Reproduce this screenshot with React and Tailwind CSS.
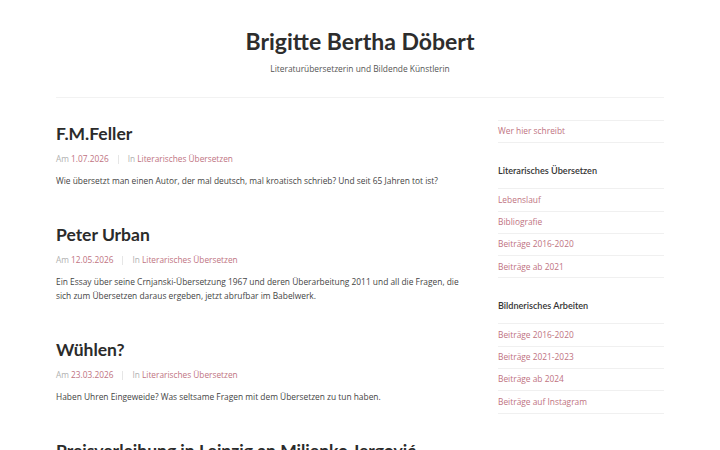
import React from "react";

const head = { fontFamily: "Lato, 'Noto Sans', sans-serif" };
const body = { fontFamily: "'Open Sans', 'Noto Sans', sans-serif" };

function Post({ title, date, text }) {
  return (
    <article className="mb-[36px]">
      <h2 className="text-[17.5px] leading-[22px] font-bold text-[#2b2b2b]" style={head}>{title}</h2>
      <div className="mt-[8px] flex items-center text-[8.3px] leading-[12px] text-[#b0b0b0]">
        <span>Am <span className="text-[#c0737f]">{date}</span></span>
        <span className="mx-[9px] h-[9px] w-px bg-[#e6e6e6]"></span>
        <span>In <span className="text-[#c0737f]">Literarisches Übersetzen</span></span>
      </div>
      <p className="mt-[9px] text-[8.4px] leading-[14px] text-[#444]">{text}</p>
    </article>
  );
}

function Widget({ title, items }) {
  return (
    <div className="mb-[21px]">
      {title && (
        <h3 className="text-[9.1px] leading-[14px] font-semibold text-[#333] mb-[10px]" style={head}>{title}</h3>
      )}
      <ul className="border-t border-[#f0f0f0]">
        {items.map((it) => (
          <li key={it} className="border-b border-[#f0f0f0] h-[22.3px] flex items-center text-[8.4px] text-[#c0737f]">{it}</li>
        ))}
      </ul>
    </div>
  );
}

export default function App() {
  return (
    <div className="w-[720px] h-[450px] overflow-hidden bg-white" style={body}>
      <header className="mx-[56px] pt-[26px] pb-[22px] border-b border-[#f2f2f2] text-center">
        <h1 className="text-[23px] leading-[30px] font-bold text-[#2d2d2d]" style={head}>Brigitte Bertha Döbert</h1>
        <p className="mt-[7px] text-[8.4px] leading-[12px] text-[#555]">Literaturübersetzerin und Bildende Künstlerin</p>
      </header>
      <div className="mx-[56px] flex justify-between pt-[21px]">
        <main className="w-[406px] pt-[4px]">
          <Post title="F.M.Feller" date="1.07.2026" text="Wie übersetzt man einen Autor, der mal deutsch, mal kroatisch schrieb? Und seit 65 Jahren tot ist?" />
          <Post title="Peter Urban" date="12.05.2026" text="Ein Essay über seine Crnjanski-Übersetzung 1967 und deren Überarbeitung 2011 und all die Fragen, die sich zum Übersetzen daraus ergeben, jetzt abrufbar im Babelwerk." />
          <Post title="Wühlen?" date="23.03.2026" text="Haben Uhren Eingeweide? Was seltsame Fragen mit dem Übersetzen zu tun haben." />
          <Post title="Preisverleihung in Leipzig an Miljenko Jergović" date="01.03.2026" text="" />
        </main>
        <aside className="w-[166px] pt-[1px]">
          <Widget items={["Wer hier schreibt"]} />
          <Widget title="Literarisches Übersetzen" items={["Lebenslauf", "Bibliografie", "Beiträge 2016-2020", "Beiträge ab 2021"]} />
          <Widget title="Bildnerisches Arbeiten" items={["Beiträge 2016-2020", "Beiträge 2021-2023", "Beiträge ab 2024", "Beiträge auf Instagram"]} />
        </aside>
      </div>
    </div>
  );
}
